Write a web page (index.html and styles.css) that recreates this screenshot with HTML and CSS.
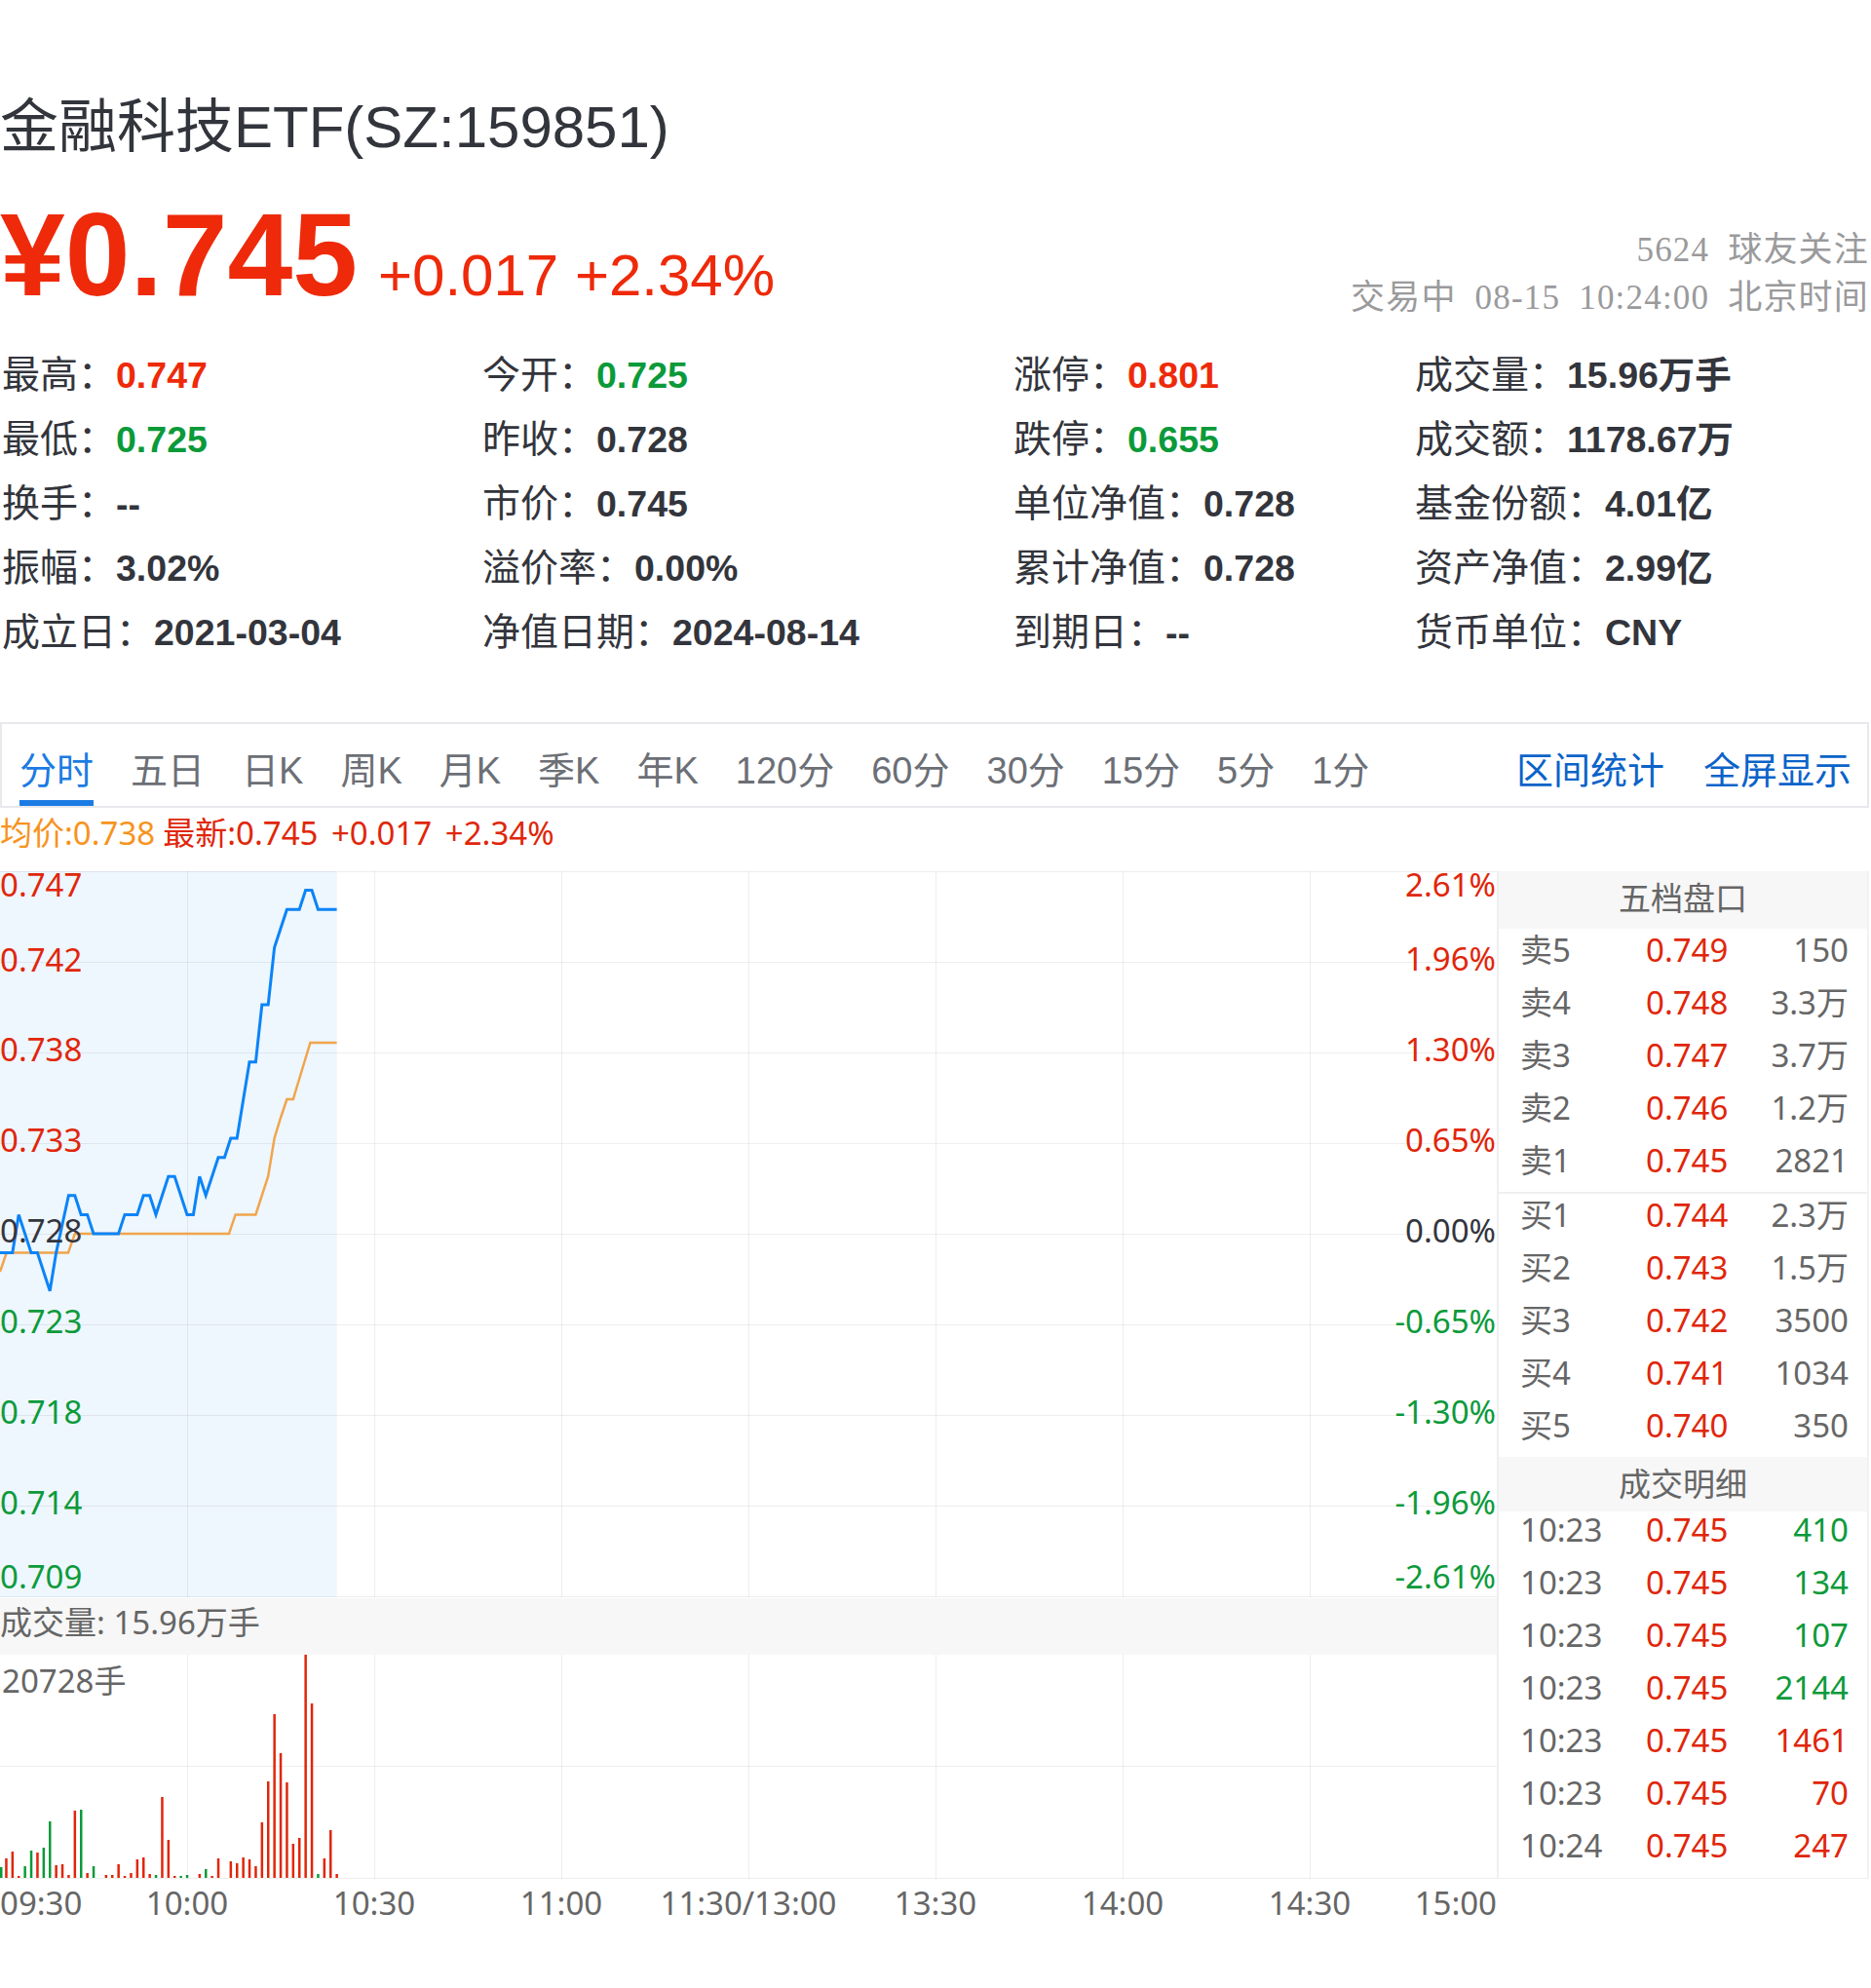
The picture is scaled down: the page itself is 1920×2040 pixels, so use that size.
FILE: index.html
```html
<!DOCTYPE html>
<html lang="zh-CN">
<head>
<meta charset="utf-8">
<title>金融科技ETF(SZ:159851)</title>
<link rel="stylesheet" href="styles.css">
</head>
<body>
<div class="page">
  <h1 class="title">金融科技ETF(SZ:159851)</h1>

  <div class="quote">
    <div class="quote-main">
      <span class="price">¥0.745</span>
      <span class="change">+0.017 +2.34%</span>
    </div>
    <div class="quote-meta">
      <div>5624 球友关注</div>
      <div>交易中 08-15 10:24:00 北京时间</div>
    </div>
  </div>

  <div class="info">
    <div>最高：<b class="up">0.747</b></div>
    <div>今开：<b class="down">0.725</b></div>
    <div>涨停：<b class="up">0.801</b></div>
    <div>成交量：<b>15.96万手</b></div>

    <div>最低：<b class="down">0.725</b></div>
    <div>昨收：<b>0.728</b></div>
    <div>跌停：<b class="down">0.655</b></div>
    <div>成交额：<b>1178.67万</b></div>

    <div>换手：<b>--</b></div>
    <div>市价：<b>0.745</b></div>
    <div>单位净值：<b>0.728</b></div>
    <div>基金份额：<b>4.01亿</b></div>

    <div>振幅：<b>3.02%</b></div>
    <div>溢价率：<b>0.00%</b></div>
    <div>累计净值：<b>0.728</b></div>
    <div>资产净值：<b>2.99亿</b></div>

    <div>成立日：<b>2021-03-04</b></div>
    <div>净值日期：<b>2024-08-14</b></div>
    <div>到期日：<b>--</b></div>
    <div>货币单位：<b>CNY</b></div>
  </div>

  <div class="tabs">
    <div class="tab-list">
      <span class="tab active">分时</span>
      <span class="tab">五日</span>
      <span class="tab">日K</span>
      <span class="tab">周K</span>
      <span class="tab">月K</span>
      <span class="tab">季K</span>
      <span class="tab">年K</span>
      <span class="tab">120分</span>
      <span class="tab">60分</span>
      <span class="tab">30分</span>
      <span class="tab">15分</span>
      <span class="tab">5分</span>
      <span class="tab">1分</span>
    </div>
    <div class="tools">
      <span>区间统计</span>
      <span>全屏显示</span>
    </div>
  </div>

  <div class="legend"><span class="avg">均价:0.738</span><span class="last">最新:0.745 +0.017 +2.34%</span></div>

  <div class="chart-row">
    <div class="chart">
      <svg class="chart-svg" width="1536" height="1034" viewBox="0 0 1536 1034">
        <rect x="0" y="0" width="345.6" height="745" fill="#eef6fe"/>
        <rect x="0" y="746" width="1536" height="58" fill="#f7f7f7"/>
        <g class="grid">
          <line x1="0" y1="0.5" x2="1536" y2="0.5"/>
          <line x1="0" y1="93.5" x2="1536" y2="93.5"/>
          <line x1="0" y1="186.5" x2="1536" y2="186.5"/>
          <line x1="0" y1="279.5" x2="1536" y2="279.5"/>
          <line x1="0" y1="372.5" x2="1536" y2="372.5"/>
          <line x1="0" y1="465.5" x2="1536" y2="465.5"/>
          <line x1="0" y1="558.5" x2="1536" y2="558.5"/>
          <line x1="0" y1="651.5" x2="1536" y2="651.5"/>
          <line x1="0" y1="744.5" x2="1536" y2="744.5"/>
          <line x1="0" y1="918.5" x2="1536" y2="918.5"/>
          <line x1="0" y1="1033.5" x2="1536" y2="1033.5"/>
          <line x1="192.5" y1="0" x2="192.5" y2="745"/>
          <line x1="384.5" y1="0" x2="384.5" y2="745"/>
          <line x1="576.5" y1="0" x2="576.5" y2="745"/>
          <line x1="768.5" y1="0" x2="768.5" y2="745"/>
          <line x1="960.5" y1="0" x2="960.5" y2="745"/>
          <line x1="1152.5" y1="0" x2="1152.5" y2="745"/>
          <line x1="1344.5" y1="0" x2="1344.5" y2="745"/>
          <line x1="192.5" y1="804" x2="192.5" y2="1034"/>
          <line x1="384.5" y1="804" x2="384.5" y2="1034"/>
          <line x1="576.5" y1="804" x2="576.5" y2="1034"/>
          <line x1="768.5" y1="804" x2="768.5" y2="1034"/>
          <line x1="960.5" y1="804" x2="960.5" y2="1034"/>
          <line x1="1152.5" y1="804" x2="1152.5" y2="1034"/>
          <line x1="1344.5" y1="804" x2="1344.5" y2="1034"/>
        </g>
        <polyline class="avg-line" points="0,411 6.7,391.6 70,391.6 76.8,372 235,372 241.6,352.4 262.4,352.4 275.2,313 281.6,274 288,253 294.4,234 300.8,234 318.4,176 345.6,176"/>
        <polyline class="price-line" points="0,391.6 12.8,391.6 19.2,352.4 32,391.6 38.4,391.6 51.2,430.7 57.6,391.6 70.4,332.8 76.8,332.8 83.2,352.4 89.6,352.4 96,372 121.6,372 128,352.4 140.8,352.4 147.2,332.8 153.6,332.8 160,352.4 172.8,313.3 179.2,313.3 192,352.4 198.4,352.4 204.8,313.3 211.2,332.8 224,293.7 230.4,293.7 236.8,274.1 243.2,274.1 256,195.8 262.4,195.8 268.8,137.1 275.2,137.1 281.6,78.3 288,58.7 294.4,39.2 307.2,39.2 313.6,19.6 320,19.6 326.4,39.2 345.6,39.2"/>

        <g class="lbl-left">
          <text x="0" y="26" class="t-up">0.747</text>
          <text x="0" y="103" class="t-up">0.742</text>
          <text x="0" y="195" class="t-up">0.738</text>
          <text x="0" y="288" class="t-up">0.733</text>
          <text x="0" y="381" class="t-flat">0.728</text>
          <text x="0" y="474" class="t-down">0.723</text>
          <text x="0" y="567" class="t-down">0.718</text>
          <text x="0" y="660" class="t-down">0.714</text>
          <text x="0" y="736" class="t-down">0.709</text>
        </g>
        <g class="lbl-right">
          <text x="1535" y="26" class="t-up">2.61%</text>
          <text x="1535" y="102" class="t-up">1.96%</text>
          <text x="1535" y="195" class="t-up">1.30%</text>
          <text x="1535" y="288" class="t-up">0.65%</text>
          <text x="1535" y="381" class="t-flat">0.00%</text>
          <text x="1535" y="474" class="t-down">-0.65%</text>
          <text x="1535" y="567" class="t-down">-1.30%</text>
          <text x="1535" y="660" class="t-down">-1.96%</text>
          <text x="1535" y="736" class="t-down">-2.61%</text>
        </g>
        <text x="0" y="783" class="t-gray">成交量: 15.96万手</text>
        <text x="2" y="843" class="t-gray">20728手</text>

        <g class="bars">
          <rect class="g" x="0" y="1022" width="2.5" height="11"/>
          <rect class="r" x="5.2" y="1013" width="2.5" height="20"/>
          <rect class="r" x="11.6" y="1006" width="2.5" height="27"/>
          <rect class="r" x="18" y="1031" width="2.5" height="2"/>
          <rect class="g" x="24.4" y="1021" width="2.5" height="12"/>
          <rect class="g" x="30.8" y="1005" width="2.5" height="28"/>
          <rect class="r" x="37.2" y="1007" width="2.5" height="26"/>
          <rect class="g" x="43.6" y="1002" width="2.5" height="31"/>
          <rect class="g" x="50" y="975" width="2.5" height="58"/>
          <rect class="r" x="56.4" y="1020" width="2.5" height="13"/>
          <rect class="r" x="62.8" y="1019" width="2.5" height="14"/>
          <rect class="r" x="69.2" y="1030" width="2.5" height="3"/>
          <rect class="r" x="75.6" y="964" width="2.5" height="69"/>
          <rect class="g" x="82" y="963" width="2.5" height="70"/>
          <rect class="r" x="88.4" y="1028" width="2.5" height="5"/>
          <rect class="g" x="94.8" y="1021" width="2.5" height="12"/>
          <rect class="r" x="107.6" y="1030" width="2.5" height="3"/>
          <rect class="r" x="114" y="1030" width="2.5" height="3"/>
          <rect class="r" x="120.4" y="1019" width="2.5" height="14"/>
          <rect class="r" x="126.8" y="1031" width="2.5" height="2"/>
          <rect class="r" x="133.2" y="1028" width="2.5" height="5"/>
          <rect class="r" x="139.6" y="1014" width="2.5" height="19"/>
          <rect class="r" x="146" y="1012" width="2.5" height="21"/>
          <rect class="r" x="152.4" y="1029" width="2.5" height="4"/>
          <rect class="g" x="158.8" y="1030" width="2.5" height="3"/>
          <rect class="r" x="165.2" y="950" width="2.5" height="83"/>
          <rect class="r" x="171.6" y="994" width="2.5" height="39"/>
          <rect class="r" x="178" y="1031" width="2.5" height="2"/>
          <rect class="g" x="184.4" y="1031" width="2.5" height="2"/>
          <rect class="g" x="190.8" y="1030" width="2.5" height="3"/>
          <rect class="r" x="203.6" y="1029" width="2.5" height="4"/>
          <rect class="g" x="210" y="1024" width="2.5" height="9"/>
          <rect class="r" x="216.4" y="1031" width="2.5" height="2"/>
          <rect class="r" x="222.8" y="1013" width="2.5" height="20"/>
          <rect class="r" x="235.6" y="1016" width="2.5" height="17"/>
          <rect class="r" x="242" y="1018" width="2.5" height="15"/>
          <rect class="r" x="248.4" y="1012" width="2.5" height="21"/>
          <rect class="r" x="254.8" y="1014" width="2.5" height="19"/>
          <rect class="r" x="261.2" y="1021" width="2.5" height="12"/>
          <rect class="r" x="267.6" y="976" width="2.5" height="57"/>
          <rect class="r" x="274" y="934" width="2.5" height="99"/>
          <rect class="r" x="280.4" y="865" width="2.5" height="168"/>
          <rect class="r" x="286.8" y="905" width="2.5" height="128"/>
          <rect class="r" x="293.2" y="935" width="2.5" height="98"/>
          <rect class="r" x="299.6" y="998" width="2.5" height="35"/>
          <rect class="r" x="306" y="992" width="2.5" height="41"/>
          <rect class="r" x="312.4" y="804" width="2.5" height="229"/>
          <rect class="r" x="318.8" y="854" width="2.5" height="179"/>
          <rect class="g" x="325.2" y="1029" width="2.5" height="4"/>
          <rect class="r" x="331.6" y="1013" width="2.5" height="20"/>
          <rect class="r" x="338" y="984" width="2.5" height="49"/>
          <rect class="r" x="344.4" y="1029" width="2.5" height="4"/>
        </g>
      </svg>
    </div>

    <aside class="panel">
      <div class="phead">五档盘口</div>
      <div class="book">
        <div class="prow"><span>卖5</span><span class="pp">0.749</span><span class="pv">150</span></div>
        <div class="prow"><span>卖4</span><span class="pp">0.748</span><span class="pv">3.3万</span></div>
        <div class="prow"><span>卖3</span><span class="pp">0.747</span><span class="pv">3.7万</span></div>
        <div class="prow"><span>卖2</span><span class="pp">0.746</span><span class="pv">1.2万</span></div>
        <div class="prow"><span>卖1</span><span class="pp">0.745</span><span class="pv">2821</span></div>
      </div>
      <div class="book buy">
        <div class="prow"><span>买1</span><span class="pp">0.744</span><span class="pv">2.3万</span></div>
        <div class="prow"><span>买2</span><span class="pp">0.743</span><span class="pv">1.5万</span></div>
        <div class="prow"><span>买3</span><span class="pp">0.742</span><span class="pv">3500</span></div>
        <div class="prow"><span>买4</span><span class="pp">0.741</span><span class="pv">1034</span></div>
        <div class="prow"><span>买5</span><span class="pp">0.740</span><span class="pv">350</span></div>
      </div>
      <div class="phead thead">成交明细</div>
      <div class="trades">
        <div class="trow"><span>10:23</span><span class="pp">0.745</span><span class="pv t-dn">410</span></div>
        <div class="trow"><span>10:23</span><span class="pp">0.745</span><span class="pv t-dn">134</span></div>
        <div class="trow"><span>10:23</span><span class="pp">0.745</span><span class="pv t-dn">107</span></div>
        <div class="trow"><span>10:23</span><span class="pp">0.745</span><span class="pv t-dn">2144</span></div>
        <div class="trow"><span>10:23</span><span class="pp">0.745</span><span class="pv t-rd">1461</span></div>
        <div class="trow"><span>10:23</span><span class="pp">0.745</span><span class="pv t-rd">70</span></div>
        <div class="trow"><span>10:24</span><span class="pp">0.745</span><span class="pv t-rd">247</span></div>
      </div>
    </aside>
  </div>

  <div class="axis">
    <svg class="axis-svg" width="1536" height="60" viewBox="0 0 1536 60">
      <text x="0" y="37">09:30</text>
      <text x="192" y="37" text-anchor="middle">10:00</text>
      <text x="384" y="37" text-anchor="middle">10:30</text>
      <text x="576" y="37" text-anchor="middle">11:00</text>
      <text x="768" y="37" text-anchor="middle">11:30/13:00</text>
      <text x="960" y="37" text-anchor="middle">13:30</text>
      <text x="1152" y="37" text-anchor="middle">14:00</text>
      <text x="1344" y="37" text-anchor="middle">14:30</text>
      <text x="1536" y="37" text-anchor="end">15:00</text>
    </svg>
  </div>
</div>
</body>
</html>
```

FILE: styles.css
```css
html, body {
  margin: 0;
  padding: 0;
  background: #ffffff;
}

.page {
  width: 1918px;
  font-family: "Liberation Sans", "Noto Sans CJK SC", sans-serif;
  color: #33353c;
}

.title {
  margin: 91px 0 0;
  font-size: 60px;
  line-height: 80px;
  font-weight: normal;
  color: #33353c;
  white-space: nowrap;
}

.quote {
  margin-top: 30px;
  display: flex;
  justify-content: space-between;
  align-items: flex-end;
}

.quote-main {
  display: flex;
  align-items: baseline;
  color: #ee2a0a;
}

.price {
  font-size: 120px;
  line-height: 120px;
  font-weight: bold;
}

.change {
  font-size: 60px;
  line-height: 60px;
  margin-left: 21px;
}

.quote-meta {
  text-align: right;
  font-family: "Liberation Serif", "Noto Sans CJK SC", serif;
  font-size: 35px;
  line-height: 49px;
  letter-spacing: 1.2px;
  word-spacing: 9px;
  color: #9a9a9c;
  margin-bottom: -9px;
  white-space: nowrap;
}

.info {
  margin-top: 31px;
  padding-left: 2px;
  display: grid;
  grid-template-columns: 493px 545px 412px 1fr;
  grid-auto-rows: 66px;
  font-size: 39px;
  line-height: 66px;
  white-space: nowrap;
}

.info b {
  font-weight: bold;
  font-size: 37.5px;
}

.up { color: #ee2a0a; }
.down { color: #0b9a3a; }

.tabs {
  margin-top: 59px;
  border: 2px solid #e8e9ed;
  height: 84px;
  display: flex;
  padding: 0 16px 0 18px;
  font-size: 38px;
  white-space: nowrap;
}

.tab-list {
  display: flex;
  gap: 38px;
}

.tab {
  position: relative;
  padding-top: 12px;
  line-height: 72px;
  color: #6c6f76;
}

.tab.active {
  color: #1b7be3;
}

.tab.active::after {
  content: "";
  position: absolute;
  left: 0;
  right: 0;
  bottom: 0;
  height: 6px;
  background: #1b7be3;
}

.tools {
  margin-left: auto;
  display: flex;
  gap: 40px;
  padding-top: 12px;
  line-height: 72px;
  color: #0b63c9;
}

.legend {
  font-family: "Noto Sans", "Noto Sans CJK SC", sans-serif;
  font-size: 33px;
  line-height: 51px;
  padding-bottom: 14px;
  white-space: pre;
}

.legend .avg { color: #f7931e; }
.legend .last {
  color: #e0260a;
  margin-left: 8px;
  word-spacing: 5px;
}

.chart-row {
  display: flex;
  height: 1034px;
}

.chart {
  width: 1536px;
  flex: none;
}

.chart-svg, .axis-svg {
  display: block;
  overflow: visible;
  font-family: "Noto Sans", "Noto Sans CJK SC", sans-serif;
  font-size: 33px;
}

.grid line {
  stroke: rgba(0, 0, 0, 0.065);
  stroke-width: 1;
  shape-rendering: crispEdges;
}

.price-line {
  fill: none;
  stroke: #0a84f8;
  stroke-width: 3;
  stroke-linejoin: miter;
}

.avg-line {
  fill: none;
  stroke: #f0a54c;
  stroke-width: 2.5;
}

.lbl-right text { text-anchor: end; }

.t-up { fill: #e0260a; }
.t-down { fill: #0c9a3a; }
.t-flat { fill: #33353c; }
.t-gray { fill: #666666; }

.bars .r { fill: #e0260a; }
.bars .g { fill: #0c9a3a; }

.panel {
  width: 382px;
  flex: none;
  box-sizing: border-box;
  border-left: 2px solid #efefef;
  border-right: 2px solid #f2f2f2;
  border-bottom: 1px solid #efefef;
  overflow: hidden;
  font-family: "Noto Sans", "Noto Sans CJK SC", sans-serif;
  font-size: 33px;
  color: #666666;
  white-space: nowrap;
}

.phead {
  height: 59px;
  line-height: 56px;
  padding-bottom: 3px;
  box-sizing: border-box;
  text-align: center;
  background: #f7f7f7;
  color: #666666;
}

.phead.thead {
  height: 56px;
  line-height: 56px;
  padding-bottom: 0;
}

.buy {
  border-top: 2px solid #efefef;
}

.prow, .trow {
  display: grid;
  grid-template-columns: 129px 1fr auto;
  padding-left: 22px;
  padding-right: 19px;
}

.prow {
  line-height: 44px;
  padding-bottom: 10px;
}

.trow {
  line-height: 38px;
  padding-bottom: 16px;
}

.pp { color: #e0260a; }
.pv { text-align: right; }
.t-dn { color: #0c9a3a; }
.t-rd { color: #e0260a; }

.axis-svg text {
  fill: #666666;
}
```
